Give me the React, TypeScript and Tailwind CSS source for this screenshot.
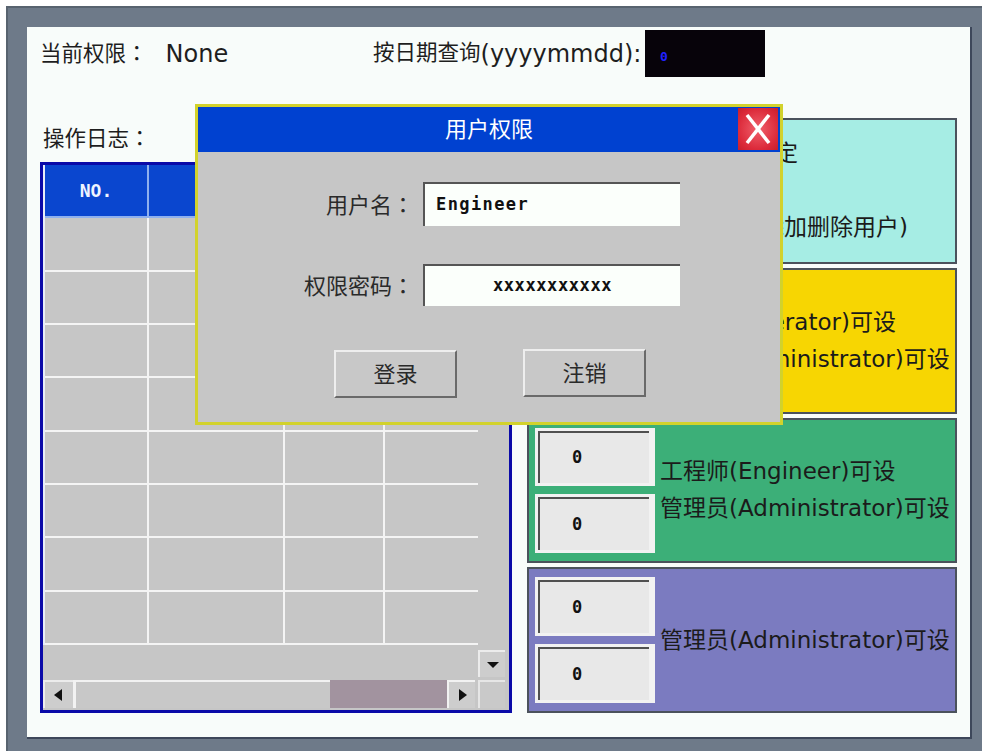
import React from "react";

const Colon = () => <span className="font-['Noto_Sans_CJK_JP',sans-serif]">：</span>;

const Box = () => (
  <div className="flex-1 w-[120px] bg-[#f2f2f2] p-[3px] pr-[6px]">
    <div className="h-full border-t-2 border-l-2 border-[#505050] bg-[#e8e8e8] flex items-center pl-[32px] font-['DejaVu_Sans_Mono',monospace] font-bold text-[17px] text-[#111]">
      0
    </div>
  </div>
);

const Panel = ({
  bg,
  lines,
  boxes,
}: {
  bg: string;
  lines: string[];
  boxes: boolean;
}) => (
  <div className={`flex-1 flex border-2 border-[#4b525c] ${bg}`}>
    <div className="w-[131px] shrink-0 pl-[6px] py-[8px] flex flex-col gap-[8px]">
      {boxes ? (
        <>
          <Box />
          <Box />
        </>
      ) : null}
    </div>
    <div className="flex-1 flex flex-col justify-center text-[23px] leading-[37px] whitespace-nowrap text-[#1b1b1b]">
      {lines.map((l, i) => (
        <div key={i}>{l || "\u00a0"}</div>
      ))}
    </div>
  </div>
);

const Tri = ({ dir }: { dir: "l" | "r" | "d" }) => (
  <svg width="14" height="14" viewBox="0 0 14 14">
    {dir === "l" && <polygon points="10,1 10,13 2,7" fill="#111" />}
    {dir === "r" && <polygon points="4,1 4,13 12,7" fill="#111" />}
    {dir === "d" && <polygon points="1,4 13,4 7,10" fill="#111" />}
  </svg>
);

export default function App() {
  const headers = ["NO.", "DATE", "", ""];
  const rows = Array.from({ length: 8 });
  return (
    <div className="relative w-[982px] h-[751px] bg-white overflow-hidden font-['DejaVu_Sans','Noto_Sans_CJK_SC',sans-serif] text-[#1e1e1e]">
      <div className="ml-[6px] mt-[6px] w-[976px] h-[745px] bg-[#6e7a89] border-t-2 border-l-2 border-[#58636f] pt-[19px] pl-[19px]">
        <div className="w-[945px] h-[712px] bg-[#f8fcfa] border-r-2 border-b-2 border-[#3d475a] flex flex-col pl-[13px] pt-[3px] pb-[24px]">
          {/* top row */}
          <div className="h-[47px] flex items-center">
            <div className="w-[333px] whitespace-nowrap flex items-center">
              <span className="text-[21.5px]">当前权限<Colon /></span>
              <span className="ml-[18px] text-[24px]">None</span>
            </div>
            <div className="w-[272px] whitespace-nowrap flex items-center">
              <span className="text-[21.5px]">按日期查询</span>
              <span className="text-[24px]">(yyyymmdd):</span>
            </div>
            <div className="w-[120px] h-[47px] bg-[#07030a] flex items-center pl-[15px] pt-[6px] font-['DejaVu_Sans_Mono',monospace] font-bold text-[13px] text-[#2020ff]">
              0
            </div>
          </div>

          {/* main */}
          <div className="flex-1 flex items-end gap-[15px]">
            {/* left column */}
            <div className="flex flex-col">
              <div className="ml-[3px] mb-[12px] h-[26px] leading-[26px] text-[21.5px]">操作日志<Colon /></div>
              <div className="w-[472px] h-[551px] border-[3px] border-[#0a0aa8] bg-[#c6c6c6] flex">
                <div className="w-[435px] flex flex-col">
                  <div className="h-[480px] grid grid-cols-[104px_136px_100px_95px] grid-rows-9 border-l-2 border-[#e8eef8]">
                    {headers.map((h, i) => (
                      <div
                        key={i}
                        className="bg-[#0a46cf] border-r-2 border-b-2 border-[#8fb0ee] flex items-center justify-center font-['DejaVu_Sans_Mono',monospace] font-bold text-[18px] text-[#eef4ff]"
                      >
                        {h}
                      </div>
                    ))}
                    {rows.map((_, r) =>
                      [0, 1, 2, 3].map((c) => (
                        <div key={`${r}-${c}`} className="border-r-2 border-b-2 border-[#f4f4f4] bg-[#c6c6c6]" />
                      ))
                    )}
                  </div>
                  <div className="flex-1" />
                  <div className="h-[28px] mb-[2px] flex">
                    <div className="w-[30px] bg-[#cdcdcd] border-t-2 border-l-2 border-[#ececec] flex items-center justify-center">
                      <Tri dir="l" />
                    </div>
                    <div className="w-[257px] bg-[#c8c8c8] border-t-2 border-l-[3px] border-[#f2f2f2]" />
                    <div className="w-[117px] bg-[#a2939f]" />
                    <div className="w-[28px] bg-[#cdcdcd] border-l-2 border-t-2 border-[#f2f2f2] flex items-center justify-center">
                      <Tri dir="r" />
                    </div>
                  </div>
                </div>
                <div className="flex-1 flex flex-col pb-[2px]">
                  <div className="flex-1 bg-[#c6c6c6]" />
                  <div className="h-[27px] w-[27px] bg-[#cdcdcd] border-t-2 border-l-2 border-[#ececec] flex items-center justify-center">
                    <Tri dir="d" />
                  </div>
                  <div className="h-[3px]" />
                  <div className="h-[28px] w-[27px] bg-[#c9c9c9] border-t-2 border-l-2 border-[#e6e6e6]" />
                </div>
              </div>
            </div>

            {/* right column */}
            <div className="w-[430px] h-[595px] flex flex-col gap-[4px]">
              <Panel bg="bg-[#a6ede4]" boxes={false} lines={["用户密码设定", "", "(管理员可添加删除用户)"]} />
              <Panel bg="bg-[#f7d602]" boxes lines={["操作员(Operator)可设", "管理员(Administrator)可设"]} />
              <Panel bg="bg-[#3caf78]" boxes lines={["工程师(Engineer)可设", "管理员(Administrator)可设"]} />
              <Panel bg="bg-[#7b7bc0]" boxes lines={["管理员(Administrator)可设"]} />
            </div>
          </div>
        </div>
      </div>

      {/* dialog */}
      <div className="absolute left-[195px] top-[104px] w-[588px] h-[321px] border-[3px] border-[#d2d22c] bg-[#c6c6c6] flex flex-col">
        <div className="relative h-[45px] bg-[#0041d0] flex items-center justify-center text-[22px] text-white">
          用户权限
          <div className="absolute right-[2px] top-[1px] w-[40px] h-[42px] bg-[radial-gradient(circle,#f0606c_0%,#dc2a3a_70%,#c81e2c_100%)]">
            <svg width="40" height="42" viewBox="0 0 40 42">
              <line x1="9" y1="7" x2="31" y2="35" stroke="white" strokeWidth="3.5" />
              <line x1="31" y1="7" x2="9" y2="35" stroke="white" strokeWidth="3.5" />
            </svg>
          </div>
        </div>
        <div className="flex flex-col pt-[30px]">
          <div className="flex items-center">
            <div className="w-[216px] text-right text-[22px] text-[#2a2a2a]">用户名<Colon /></div>
            <div className="ml-[9px] w-[257px] h-[44px] bg-[#fbfffb] border-t-2 border-l-2 border-[#555] flex items-center pl-[11px] font-['DejaVu_Sans_Mono',monospace] font-bold text-[17px] tracking-[1.4px] text-[#111]">
              Engineer
            </div>
          </div>
          <div className="flex items-center mt-[38px]">
            <div className="w-[216px] text-right text-[22px] text-[#2a2a2a]">权限密码<Colon /></div>
            <div className="ml-[9px] w-[257px] h-[42px] bg-[#fbfffb] border-t-2 border-l-2 border-[#555] flex items-center justify-center font-['DejaVu_Sans_Mono',monospace] font-bold text-[17px] tracking-[0.6px] text-[#111]">
              xxxxxxxxxxx
            </div>
          </div>
          <div className="flex mt-[44px]">
            <div className="ml-[136px] w-[123px] h-[48px] bg-[#c8c8c8] border-t-2 border-l-2 border-[#eeeeee] border-r-2 border-b-2 border-r-[#6a6a6a] border-b-[#6a6a6a] flex items-center justify-center text-[22px] text-[#2a2a2a]">
              登录
            </div>
            <div className="ml-[66px] -mt-[1px] w-[123px] h-[48px] bg-[#c8c8c8] border-t-2 border-l-2 border-[#eeeeee] border-r-2 border-b-2 border-r-[#6a6a6a] border-b-[#6a6a6a] flex items-center justify-center text-[22px] text-[#2a2a2a]">
              注销
            </div>
          </div>
        </div>
      </div>
    </div>
  );
}
